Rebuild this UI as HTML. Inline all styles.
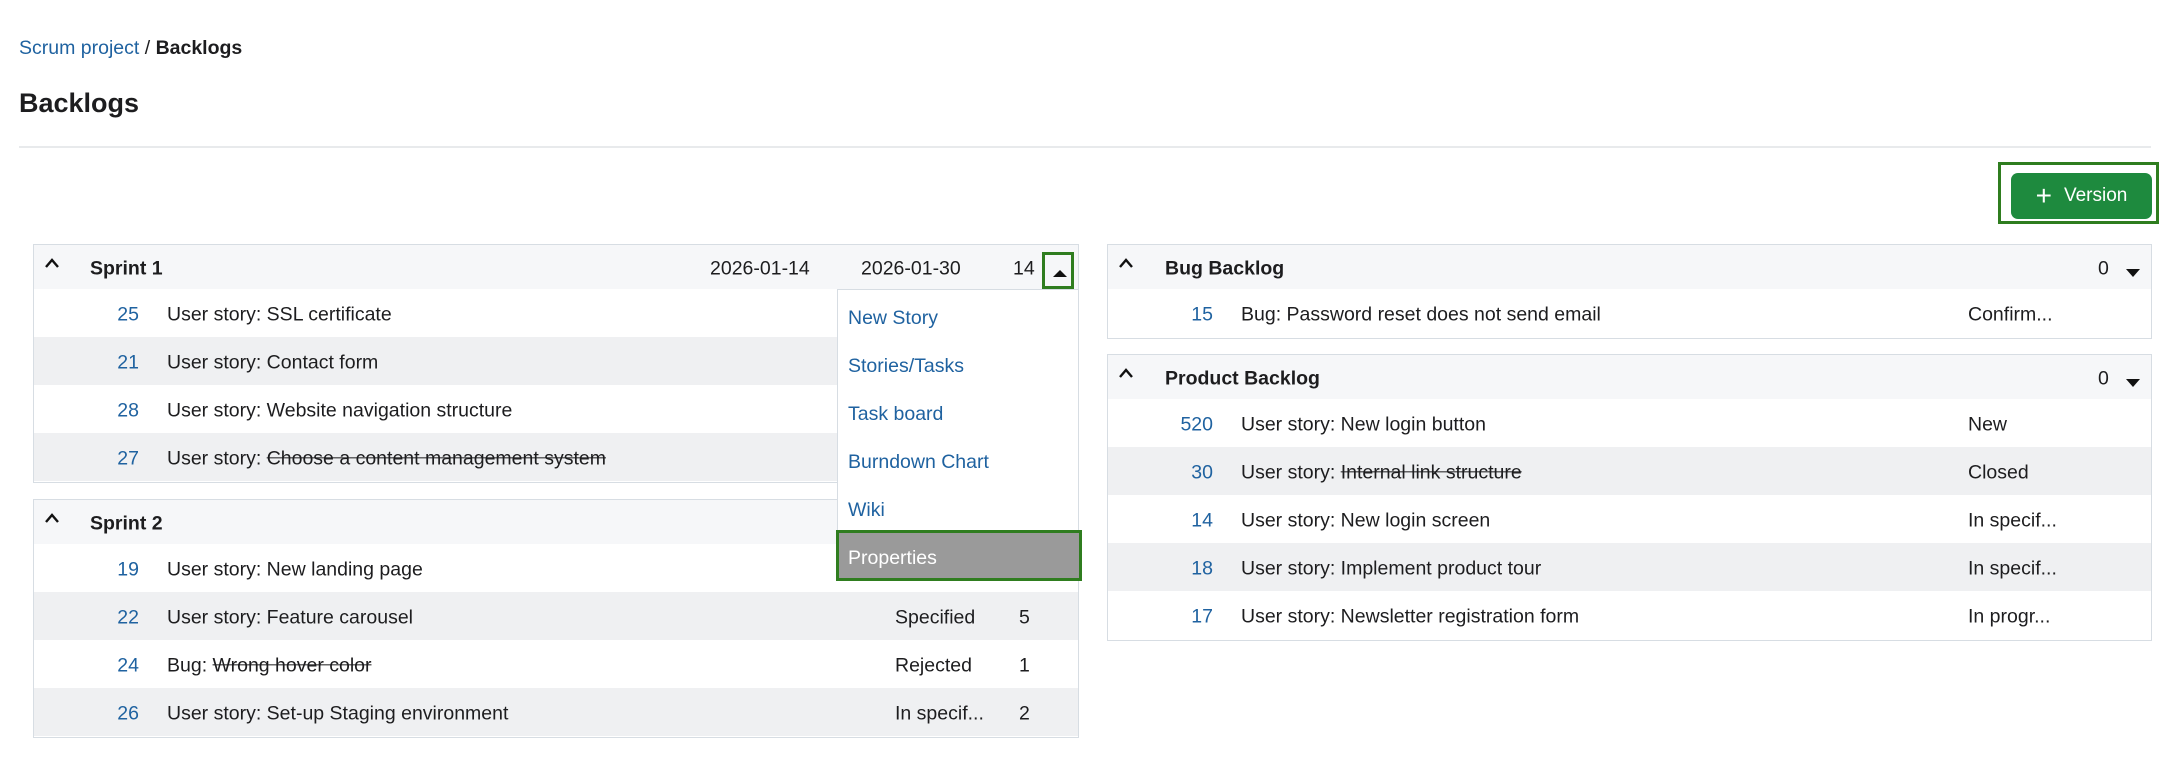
<!DOCTYPE html>
<html><head><meta charset="utf-8"><style>
*{box-sizing:border-box;margin:0;padding:0}
body{width:2170px;height:760px;background:#fff;font-family:"Liberation Sans",sans-serif;font-size:19.5px;color:#1d1d1f;position:relative;overflow:hidden}
a{color:#1f62a0;text-decoration:none}
.abs{position:absolute}
.panel{position:absolute;border:1.5px solid #d7dde3;background:#fff}
.hdr{position:absolute;left:0;right:0;height:44px;background:#f6f7f9}
.row{position:absolute;left:0;right:0;height:48px}
.row.s{background:#eff0f2}
.t{position:absolute;top:50%;transform:translateY(-42%);white-space:nowrap}
.id{text-align:right;color:#1f62a0}
.chev{position:absolute;left:10px;top:12px}
s{text-decoration:line-through}
</style></head><body>
<div class="abs" style="left:19px;top:37px"><a>Scrum project</a> / <b style="font-weight:bold">Backlogs</b></div>
<div class="abs" style="left:19px;top:88px;font-size:27px;font-weight:bold">Backlogs</div>
<div class="abs" style="left:19px;top:146px;width:2132px;height:1.5px;background:#e8eaec"></div>

<div class="abs" style="left:1998px;top:162px;width:161px;height:62px;border:3px solid #2f7d1f"></div>
<div class="abs" style="left:2011px;top:173px;width:141px;height:46px;background:#1e8a3e;border-radius:7px;color:#fff;display:flex;align-items:center;justify-content:center;gap:12px;font-size:19px"><span style="font-size:28px;font-weight:300;line-height:1">+</span>Version</div>

<!-- Sprint 1 -->
<div class="panel" style="left:33px;top:244px;width:1046px;height:239px">
 <div class="hdr" style="top:0">
  <svg class="chev" width="16" height="12" viewBox="0 0 16 12"><path d="M2 10 L8 3 L14 10" fill="none" stroke="#111" stroke-width="2.4"/></svg>
  <span class="t" style="left:56px;font-weight:bold">Sprint 1</span>
  <span class="t" style="left:676px">2026-01-14</span>
  <span class="t" style="left:827px">2026-01-30</span>
  <span class="t" style="left:979px">14</span>
  <div class="abs" style="left:1008px;top:7px;width:32px;height:37px;border:3px solid #2f7d1f"><div class="abs" style="left:8px;top:15px;width:0;height:0;border-left:7px solid transparent;border-right:7px solid transparent;border-bottom:7px solid #111"></div></div>
 </div>
 <div class="row" style="top:44px"><span class="t id" style="left:60px;width:45px">25</span><span class="t" style="left:133px">User story: SSL certificate</span></div>
 <div class="row s" style="top:92px"><span class="t id" style="left:60px;width:45px">21</span><span class="t" style="left:133px">User story: Contact form</span></div>
 <div class="row" style="top:140px"><span class="t id" style="left:60px;width:45px">28</span><span class="t" style="left:133px">User story: Website navigation structure</span></div>
 <div class="row s" style="top:188px"><span class="t id" style="left:60px;width:45px">27</span><span class="t" style="left:133px">User story: <s>Choose a content management system</s></span></div>
</div>

<!-- Sprint 2 -->
<div class="panel" style="left:33px;top:499px;width:1046px;height:239px">
 <div class="hdr" style="top:0">
  <svg class="chev" width="16" height="12" viewBox="0 0 16 12"><path d="M2 10 L8 3 L14 10" fill="none" stroke="#111" stroke-width="2.4"/></svg>
  <span class="t" style="left:56px;font-weight:bold">Sprint 2</span>
 </div>
 <div class="row" style="top:44px"><span class="t id" style="left:60px;width:45px">19</span><span class="t" style="left:133px">User story: New landing page</span></div>
 <div class="row s" style="top:92px"><span class="t id" style="left:60px;width:45px">22</span><span class="t" style="left:133px">User story: Feature carousel</span><span class="t" style="left:861px">Specified</span><span class="t" style="left:985px">5</span></div>
 <div class="row" style="top:140px"><span class="t id" style="left:60px;width:45px">24</span><span class="t" style="left:133px">Bug: <s>Wrong hover color</s></span><span class="t" style="left:861px">Rejected</span><span class="t" style="left:985px">1</span></div>
 <div class="row s" style="top:188px"><span class="t id" style="left:60px;width:45px">26</span><span class="t" style="left:133px">User story: Set-up Staging environment</span><span class="t" style="left:861px">In specif...</span><span class="t" style="left:985px">2</span></div>
</div>

<!-- Menu -->
<div class="abs" style="left:837px;top:289px;width:242px;height:292px;background:#fff;border:1.5px solid #d7dde3">
 <div class="abs" style="left:10px;top:17px"><a>New Story</a></div>
 <div class="abs" style="left:10px;top:65px"><a>Stories/Tasks</a></div>
 <div class="abs" style="left:10px;top:113px"><a>Task board</a></div>
 <div class="abs" style="left:10px;top:161px"><a>Burndown Chart</a></div>
 <div class="abs" style="left:10px;top:209px"><a>Wiki</a></div>
 <div class="abs" style="left:-2px;top:240px;width:246px;height:51px;background:#9a9a9a;border:3px solid #2f7d1f;color:#fff;padding:14px 0 0 9px">Properties</div>
</div>

<!-- Bug Backlog -->
<div class="panel" style="left:1107px;top:244px;width:1045px;height:95px">
 <div class="hdr" style="top:0">
  <svg class="chev" width="16" height="12" viewBox="0 0 16 12"><path d="M2 10 L8 3 L14 10" fill="none" stroke="#111" stroke-width="2.4"/></svg>
  <span class="t" style="left:57px;font-weight:bold">Bug Backlog</span>
  <span class="t" style="left:990px">0</span>
  <div class="abs" style="left:1018px;top:24px;border-left:7px solid transparent;border-right:7px solid transparent;border-top:8px solid #111"></div>
 </div>
 <div class="row" style="top:44px"><span class="t id" style="left:60px;width:45px">15</span><span class="t" style="left:133px">Bug: Password reset does not send email</span><span class="t" style="left:860px">Confirm...</span></div>
</div>

<!-- Product Backlog -->
<div class="panel" style="left:1107px;top:354px;width:1045px;height:287px">
 <div class="hdr" style="top:0">
  <svg class="chev" width="16" height="12" viewBox="0 0 16 12"><path d="M2 10 L8 3 L14 10" fill="none" stroke="#111" stroke-width="2.4"/></svg>
  <span class="t" style="left:57px;font-weight:bold">Product Backlog</span>
  <span class="t" style="left:990px">0</span>
  <div class="abs" style="left:1018px;top:24px;border-left:7px solid transparent;border-right:7px solid transparent;border-top:8px solid #111"></div>
 </div>
 <div class="row" style="top:44px"><span class="t id" style="left:50px;width:55px">520</span><span class="t" style="left:133px">User story: New login button</span><span class="t" style="left:860px">New</span></div>
 <div class="row s" style="top:92px"><span class="t id" style="left:60px;width:45px">30</span><span class="t" style="left:133px">User story: <s>Internal link structure</s></span><span class="t" style="left:860px">Closed</span></div>
 <div class="row" style="top:140px"><span class="t id" style="left:60px;width:45px">14</span><span class="t" style="left:133px">User story: New login screen</span><span class="t" style="left:860px">In specif...</span></div>
 <div class="row s" style="top:188px"><span class="t id" style="left:60px;width:45px">18</span><span class="t" style="left:133px">User story: Implement product tour</span><span class="t" style="left:860px">In specif...</span></div>
 <div class="row" style="top:236px"><span class="t id" style="left:60px;width:45px">17</span><span class="t" style="left:133px">User story: Newsletter registration form</span><span class="t" style="left:860px">In progr...</span></div>
</div>
</body></html>
